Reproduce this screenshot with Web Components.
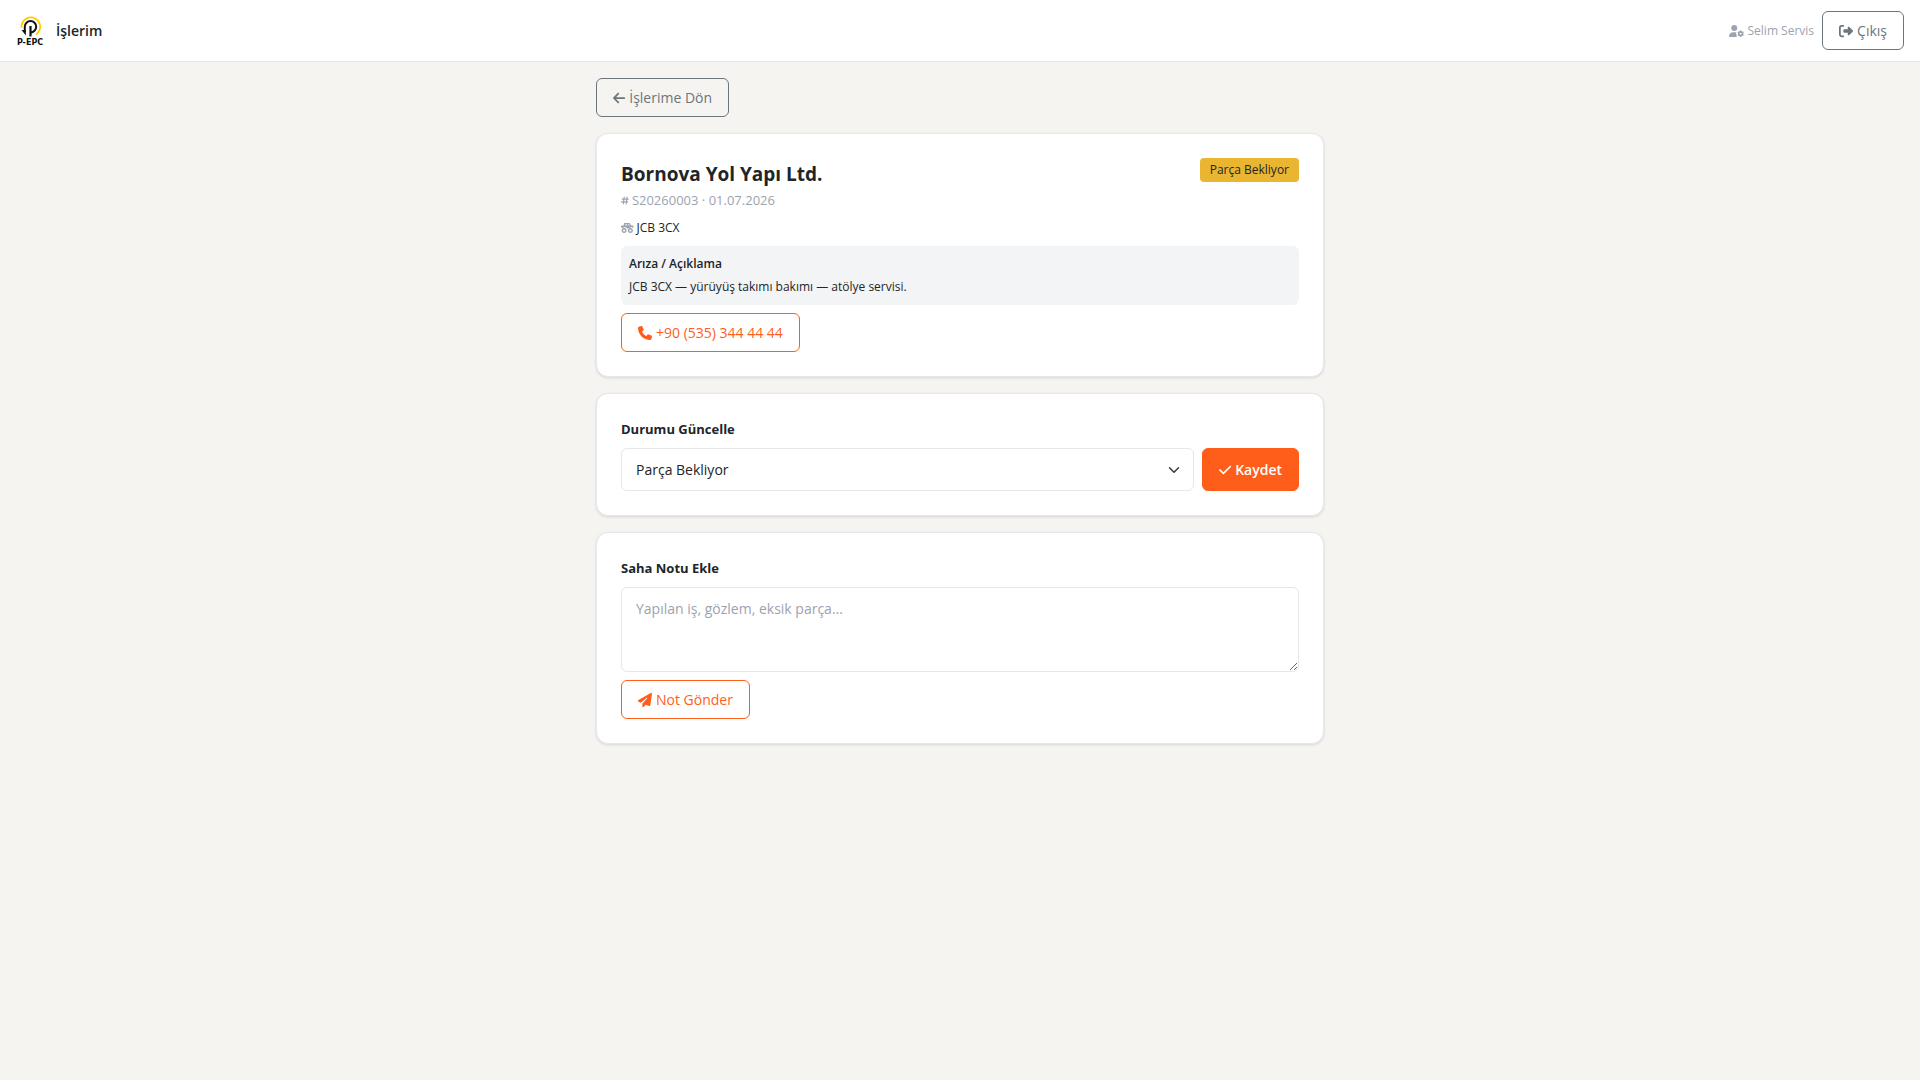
<!DOCTYPE html>
<html lang="tr">
<head>
<meta charset="utf-8">
<meta name="viewport" content="width=device-width, initial-scale=1">
<title>İşlerim</title>
<style>
  body {
    margin: 0;
    min-height: 100vh;
    background: #f5f4f0;
    color: #212529;
    font-family: "Open Sans", "Noto Sans", sans-serif;
    font-size: 14px;
    line-height: 21px;
    --accent: #ff5e1a;
    --muted: #9ca3af;
    --secondary: #6c757d;
    --line: #e5e7eb;
  }
</style>
</head>
<body>
<job-page></job-page>

<script>
const ICONS = {
  back: ['0 0 448 512', '<path d="M9.4 233.4c-12.5 12.5-12.5 32.8 0 45.3l160 160c12.5 12.5 32.8 12.5 45.3 0s12.5-32.8 0-45.3L109.2 288 416 288c17.7 0 32-14.3 32-32s-14.3-32-32-32l-306.7 0L214.6 118.6c12.5-12.5 12.5-32.8 0-45.3s-32.8-12.5-45.3 0l-160 160z"/>'],
  check: ['0 0 448 512', '<path d="M438.6 105.4c12.5 12.5 12.5 32.8 0 45.3l-256 256c-12.5 12.5-32.8 12.5-45.3 0l-128-128c-12.5-12.5-12.5-32.8 0-45.3s32.8-12.5 45.3 0L160 338.7 393.4 105.4c12.5-12.5 32.8-12.5 45.3 0z"/>'],
  phone: ['0 0 512 512', '<path d="M164.9 24.6c-7.7-18.6-28-28.5-47.4-23.2l-88 24C12.1 30.2 0 46 0 64C0 311.4 200.6 512 448 512c18 0 33.8-12.1 38.6-29.5l24-88c5.3-19.4-4.6-39.7-23.2-47.4l-96-40c-16.3-6.8-35.2-2.1-46.3 11.6L304.7 368C234.3 334.7 177.3 277.7 144 207.3L193.3 167c13.7-11.2 18.4-30 11.6-46.3l-40-96z"/>'],
  send: ['0 0 512 512', '<path d="M498.1 5.6c10.1 7 15.4 19.1 13.5 31.2l-64 416c-1.5 9.7-7.4 18.2-16 23s-18.9 5.4-28 1.6L284 427.7l-68.5 74.1c-8.9 9.7-22.9 12.9-35.2 8.1S160 493.2 160 480l0-83.6c0-4 1.5-7.8 4.2-10.8L331.8 202.8c5.8-6.3 5.6-16-.4-22s-15.7-6.4-22-.7L106 360.8 17.7 316.6C7.1 311.3 .3 300.7 0 288.9s5.9-22.8 16.1-28.7l448-256c10.7-6.1 23.9-5.5 34 1.4z"/>'],
  logout: ['0 0 512 512', '<path d="M377.9 105.9L500.7 228.7c7.2 7.2 11.3 17.1 11.3 27.3s-4.1 20.1-11.3 27.3L377.9 406.1c-6.4 6.4-15 9.9-24 9.9c-18.7 0-33.9-15.2-33.9-33.9l0-62.1-128 0c-17.7 0-32-14.3-32-32l0-64c0-17.7 14.3-32 32-32l128 0 0-62.1c0-18.7 15.2-33.9 33.9-33.9c9 0 17.6 3.6 24 9.9zM160 96L96 96c-17.7 0-32 14.3-32 32l0 256c0 17.7 14.3 32 32 32l64 0c17.7 0 32 14.3 32 32s-14.3 32-32 32l-64 0c-53 0-96-43-96-96L0 128C0 75 43 32 96 32l64 0c17.7 0 32 14.3 32 32s-14.3 32-32 32z"/>'],
  user: ['0 0 640 512', '<circle cx="224" cy="128" r="128"/><path d="M178 304h92c15 0 30 2 44 6-16 28-8 62 8 86-14 28-14 64 8 90l14 26H30c-16 0-30-13-30-30 0-98 80-178 178-178z"/><circle cx="496" cy="368" r="78" fill="none" stroke="currentColor" stroke-width="72"/><path d="M470 224h52v60h-52zM470 452h52v60h-52zM358 318l26-45 52 30-26 45zM556 433l26-45 52 30-26 45zM358 418l26 45 52-30-26-45zM556 303l26 45 52-30-26-45z"/>'],
  hash: ['0 0 448 512', '<path d="M182 64 130 448M342 64 290 448M64 176H416M32 336H384" fill="none" stroke="currentColor" stroke-width="62" stroke-linecap="round"/>'],
  machine: ['0 0 640 512', '<path d="M208 0h210c16 0 30 8 38 20l70 108h74c22 0 40 18 40 40v40c0 18-14 32-32 32h-20c-22-16-46-20-68-20-48 0-88 22-112 60h-96c-24-38-64-60-112-60-22 0-46 4-68 20H32c-18 0-32-14-32-32v-40c0-22 18-40 40-40h104V64c0-36 28-64 64-64zm16 64v64h80V64zm144 0v64h82l-42-64z" fill-rule="evenodd"/><path d="M160 256a128 128 0 1 0 .1 0zm0 72a56 56 0 1 1-.1 0zM480 256a128 128 0 1 0 .1 0zm0 72a56 56 0 1 1-.1 0z" fill-rule="evenodd"/>'],
  chevron: ['0 0 16 16', '<path d="m2 5 6 6 6-6" fill="none" stroke="#343a40" stroke-width="2" stroke-linecap="round" stroke-linejoin="round"/>']
}

class AppIcon extends HTMLElement {
  connectedCallback () {
    const [box, shape] = ICONS[this.getAttribute('name')]
    this.attachShadow({ mode: 'open' }).innerHTML = `
      <style>
        :host { display: inline-flex; flex: none; }
        svg { height: var(--icon-size, 14px); width: auto; fill: currentColor; }
      </style>
      <svg viewBox="${box}" aria-hidden="true">${shape}</svg>
    `
  }
}

class BrandLogo extends HTMLElement {
  connectedCallback () {
    this.attachShadow({ mode: 'open' }).innerHTML = `
      <style>
        :host { display: block; flex: none; }
        svg { display: block; width: 28px; height: 30px; }
        text { font: 700 8px "DejaVu Sans", sans-serif; fill: #111; }
      </style>
      <svg viewBox="0 0 28 30" role="img" aria-label="P-EPC">
        <path d="M5.6 11.6A9.3 9.3 0 1 1 20 18.4" fill="none" stroke="#fc0" stroke-width="1.8"/>
        <path d="M8.8 16V10.8a5.7 5.7 0 1 1 5.7 5.7" fill="none" stroke="#111" stroke-width="2"/>
        <path d="M14.5 10V20.4" fill="none" stroke="#111" stroke-width="2.2"/>
        <path d="M5.6 14 9.8 19.4V14z" fill="#111"/>
        <text x="14" y="29" text-anchor="middle">P-EPC</text>
      </svg>
    `
  }
}

class AppButton extends HTMLElement {
  connectedCallback () {
    const href = this.getAttribute('href')
    const tag = href ? 'a' : 'button'
    const attrs = href ? `href="${href}"` : 'type="button"'
    this.attachShadow({ mode: 'open' }).innerHTML = `
      <style>
        :host { display: inline-flex; --tone: var(--secondary); }
        :host([variant="accent"]), :host([variant="solid"]) { --tone: var(--accent); }
        a, button {
          display: inline-flex;
          align-items: center;
          gap: 4px;
          box-sizing: border-box;
          padding: 8px 16px;
          border: 1px solid var(--tone);
          border-radius: 6px;
          background: transparent;
          color: var(--tone);
          font: inherit;
          font-weight: 500;
          text-decoration: none;
          white-space: nowrap;
          cursor: pointer;
        }
        a:hover, button:hover { background: var(--tone); color: white; }
        :host([variant="solid"]) button {
          background: var(--tone);
          color: white;
          font-weight: 600;
        }
      </style>
      <${tag} ${attrs}><app-icon name="${this.getAttribute('icon')}"></app-icon><slot></slot></${tag}>
    `
  }
}

class AppHeader extends HTMLElement {
  connectedCallback () {
    this.attachShadow({ mode: 'open' }).innerHTML = `
      <style>
        :host { display: block; }
        header {
          display: flex;
          align-items: center;
          gap: 8px;
          padding: 11px 16px;
          background: white;
          border-bottom: 1px solid var(--line);
        }
        strong { flex: 1; padding-left: 4px; font-weight: 600; }
        .user {
          display: flex;
          align-items: center;
          gap: 4px;
          color: var(--muted);
          font-size: 12px;
          --icon-size: 12px;
        }
      </style>
      <header>
        <brand-logo></brand-logo>
        <strong><slot></slot></strong>
        <span class="user"><app-icon name="user"></app-icon><slot name="user"></slot></span>
        <app-button icon="logout">Çıkış</app-button>
      </header>
    `
  }
}

class AppCard extends HTMLElement {
  connectedCallback () {
    this.attachShadow({ mode: 'open' }).innerHTML = `
      <style>
        :host {
          display: block;
          padding: 24px;
          background: white;
          border: 1px solid var(--line);
          border-radius: 12px;
          box-shadow: 0 1px 3px rgba(0, 0, 0, .12);
        }
      </style>
      <slot></slot>
    `
  }
}

class JobSummary extends HTMLElement {
  connectedCallback () {
    this.attachShadow({ mode: 'open' }).innerHTML = `
      <style>
        :host { display: block; }
        .top { display: flex; justify-content: space-between; align-items: flex-start; }
        h1 { margin: 0; font-size: 19px; line-height: 32px; font-weight: 700; }
        .badge {
          padding: 2px 10px;
          border-radius: 4px;
          background: #eab530;
          font-size: 12px;
          line-height: 20px;
          font-weight: 500;
        }
        .meta, .machine {
          display: flex;
          align-items: center;
          gap: 3px;
          line-height: 20px;
        }
        .meta { color: var(--muted); font-size: 13px; --icon-size: 9px; }
        .machine { margin-top: 8px; font-size: 12px; --icon-size: 10px; }
        .machine app-icon { color: var(--muted); }
        .note {
          display: grid;
          gap: 3px;
          margin: 8px 0;
          padding: 8px;
          border-radius: 6px;
          background: #f3f4f6;
          font-size: 12px;
          line-height: 20px;
        }
        h2 { margin: 0; font-size: 12px; font-weight: 600; }
        p { margin: 0; }
      </style>
      <div class="top">
        <h1>Bornova Yol Yapı Ltd.</h1>
        <span class="badge">Parça Bekliyor</span>
      </div>
      <div class="meta"><app-icon name="hash"></app-icon>S20260003 · 01.07.2026</div>
      <div class="machine"><app-icon name="machine"></app-icon>JCB 3CX</div>
      <section class="note">
        <h2>Arıza / Açıklama</h2>
        <p>JCB 3CX — yürüyüş takımı bakımı — atölye servisi.</p>
      </section>
      <app-button variant="accent" icon="phone" href="tel:+905353444444">+90 (535) 344 44 44</app-button>
    `
  }
}

class StatusForm extends HTMLElement {
  connectedCallback () {
    this.attachShadow({ mode: 'open' }).innerHTML = `
      <style>
        :host { display: block; }
        label { display: block; margin-bottom: 8px; font-size: 13px; line-height: 22px; font-weight: 700; }
        .row { display: flex; align-items: stretch; gap: 8px; }
        .select { position: relative; flex: 1; display: flex; }
        select {
          appearance: none;
          width: 100%;
          box-sizing: border-box;
          padding: 10px 14px;
          border: 1px solid var(--line);
          border-radius: 6px;
          background: white;
          color: inherit;
          font: inherit;
        }
        .select app-icon {
          position: absolute;
          top: 0;
          bottom: 0;
          right: 14px;
          align-items: center;
          pointer-events: none;
          --icon-size: 12px;
        }
      </style>
      <label for="status">Durumu Güncelle</label>
      <div class="row">
        <div class="select">
          <select id="status"><option>Parça Bekliyor</option></select>
          <app-icon name="chevron"></app-icon>
        </div>
        <app-button variant="solid" icon="check">Kaydet</app-button>
      </div>
    `
  }
}

class NoteForm extends HTMLElement {
  connectedCallback () {
    this.attachShadow({ mode: 'open' }).innerHTML = `
      <style>
        :host { display: block; }
        label { display: block; margin-bottom: 8px; font-size: 13px; line-height: 22px; font-weight: 700; }
        textarea {
          display: block;
          width: 100%;
          box-sizing: border-box;
          margin-bottom: 8px;
          padding: 10px 14px;
          border: 1px solid var(--line);
          border-radius: 6px;
          background: white;
          color: inherit;
          font: inherit;
          resize: vertical;
        }
        textarea::placeholder { color: var(--muted); }
      </style>
      <label for="note">Saha Notu Ekle</label>
      <textarea id="note" rows="3" placeholder="Yapılan iş, gözlem, eksik parça..."></textarea>
      <app-button variant="accent" icon="send">Not Gönder</app-button>
    `
  }
}

class JobPage extends HTMLElement {
  connectedCallback () {
    this.attachShadow({ mode: 'open' }).innerHTML = `
      <style>
        :host { display: block; }
        main {
          display: flex;
          flex-direction: column;
          gap: 16px;
          box-sizing: border-box;
          max-width: 760px;
          margin: 0 auto;
          padding: 16px;
        }
        main > app-button { align-self: flex-start; }
      </style>
      <app-header>İşlerim<span slot="user">Selim Servis</span></app-header>
      <main>
        <app-button icon="back" href="#islerim">İşlerime Dön</app-button>
        <app-card><job-summary></job-summary></app-card>
        <app-card><status-form></status-form></app-card>
        <app-card><note-form></note-form></app-card>
      </main>
    `
  }
}

customElements.define('app-icon', AppIcon)
customElements.define('brand-logo', BrandLogo)
customElements.define('app-button', AppButton)
customElements.define('app-header', AppHeader)
customElements.define('app-card', AppCard)
customElements.define('job-summary', JobSummary)
customElements.define('status-form', StatusForm)
customElements.define('note-form', NoteForm)
customElements.define('job-page', JobPage)
</script>
</body>
</html>
